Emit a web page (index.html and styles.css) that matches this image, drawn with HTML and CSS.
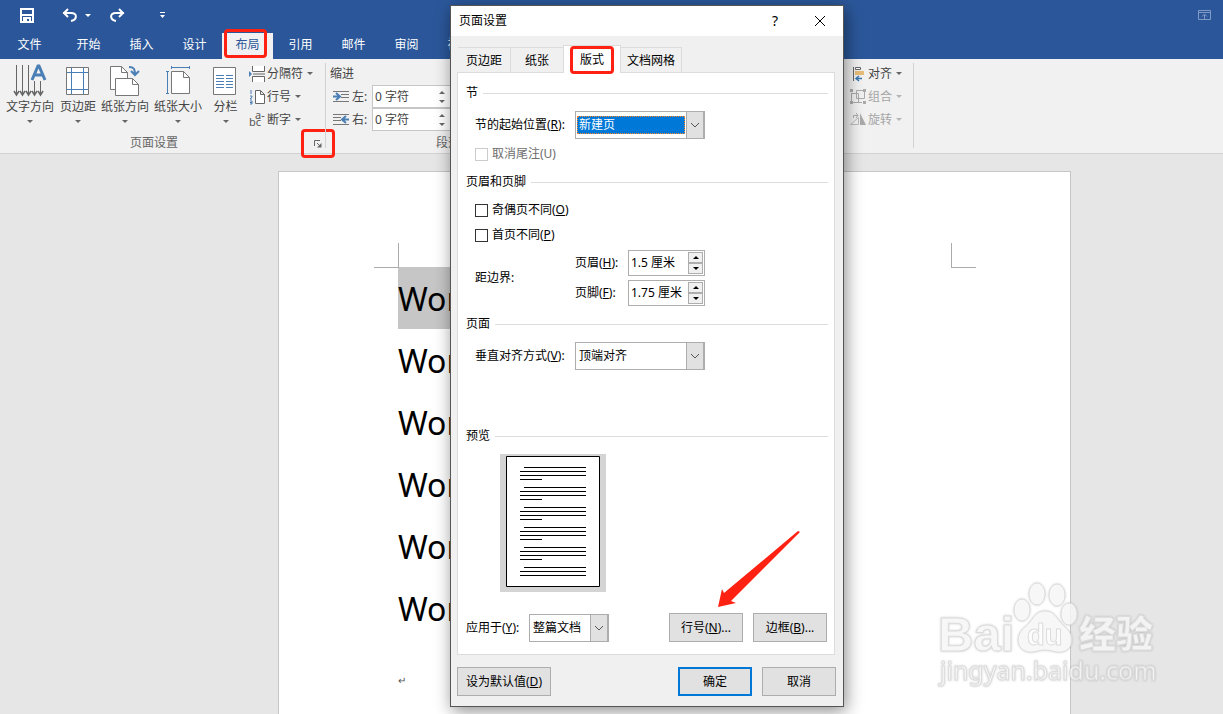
FILE: index.html
```html
<!DOCTYPE html>
<html lang="zh-CN">
<head>
    <meta charset="UTF-8">
    <meta name="viewport" content="width=device-width, initial-scale=1.0">
    <title>页面设置</title>
    <link rel="stylesheet" href="styles.css">
</head>
<body>
<header class="titlebar">
    <button class="quick save" aria-label="保存">
        <svg width="16" height="16" viewBox="0 0 16 16"><path d="M2 2h12v13H2zM3 8h10M5 15v-4h6v4" fill="none" stroke="#fff" stroke-width="2"/><path d="M6 12h2v3H6z" fill="#fff"/></svg>
    </button>
    <button class="quick undo" aria-label="撤消">
        <svg width="16" height="14" viewBox="0 0 16 14"><path d="M1 5h8c7 0 6 7 0 8M6 1L2 5l4 4" fill="none" stroke="#fff" stroke-width="2"/></svg>
    </button>
    <button class="quick undo-more" aria-label="撤消列表"><span class="caret"></span></button>
    <button class="quick redo" aria-label="恢复">
        <svg width="16" height="14" viewBox="0 0 16 14"><path d="M15 5H7c-7 0-6 7 0 8M10 1l4 4-4 4" fill="none" stroke="#fff" stroke-width="2"/></svg>
    </button>
    <button class="quick customize" aria-label="自定义快速访问工具栏">
        <svg width="7" height="8" viewBox="0 0 7 8"><path d="M1 1.500h5" stroke="#fff"/><path d="M1 4h5L3.500 7z" fill="#fff"/></svg>
    </button>
    <button class="quick ribbon-options" aria-label="功能区显示选项">
        <svg width="13" height="10" viewBox="0 0 13 10"><path d="M.5.5h12v9H.5zM0 2.500h13M6.500 9V5M4 6.500l2.500-2.500L9 6.500" fill="none" stroke="#7f9bc6"/></svg>
    </button>
</header>

<nav class="tabs">
    <a class="tab file" href="#">文件</a>
    <a class="tab" href="#">开始</a>
    <a class="tab" href="#">插入</a>
    <a class="tab" href="#">设计</a>
    <a class="tab active marked" href="#">布局</a>
    <a class="tab" href="#">引用</a>
    <a class="tab" href="#">邮件</a>
    <a class="tab" href="#">审阅</a>
    <a class="tab" href="#">视图</a>
</nav>

<div class="ribbon">
    <section class="group page-setup">
        <div class="tools">
            <button class="big direction">
                <svg width="34" height="34" viewBox="0 0 34 34"><path d="M3.500 2v29M9.500 2v29M15.500 2v29M21.500 18v13M27.500 18v13" stroke="#666" fill="none"/><path d="M1 28l2.500 4 2.500-4M7 28l2.500 4 2.500-4M13 28l2.500 4 2.500-4M19 28l2.500 4 2.500-4M25 28l2.500 4 2.500-4" fill="none" stroke="#666" stroke-width="1.500"/><path d="M19 17l6-14h1l6 14M21 12h9" fill="none" stroke="#4a7fb5" stroke-width="3"/></svg>
                <span>文字方向</span><i class="caret"></i>
            </button>
            <button class="big">
                <svg width="34" height="34" viewBox="0 0 34 34"><path d="M5.500 4.500h22v27h-22z" fill="#fff" stroke="#777"/><path d="M10.500 5v26M22.500 5v26M6 9.500h21M6 26.500h21" stroke="#4a7fb5"/></svg>
                <span>页边距</span><i class="caret"></i>
            </button>
            <button class="big">
                <svg width="34" height="34" viewBox="0 0 34 34"><path d="M2.500 3.500h11l6 6v17h-17z" fill="#fff" stroke="#777"/><path d="M13.500 3.500v6h6" fill="none" stroke="#777"/><path d="M7.500 15.500h17l6 6v11h-23z" fill="#fff" stroke="#777"/><path d="M24.500 15.500v6h6" fill="none" stroke="#777"/><path d="M21 4c5 0 6 2 6 8M23 8l4 4 4-4" fill="none" stroke="#4a7fb5" stroke-width="2"/></svg>
                <span>纸张方向</span><i class="caret"></i>
            </button>
            <button class="big">
                <svg width="34" height="34" viewBox="0 0 34 34"><path d="M10.500 8.500h12l6 6v16h-18z" fill="#fff" stroke="#777"/><path d="M22.500 8.500v6h6" fill="none" stroke="#777"/><path d="M10 4.500h19M10.500 3v3M28.500 3v3M6.500 8v22M5 8.500h3M5 30.500h3" stroke="#4a7fb5"/></svg>
                <span>纸张大小</span><i class="caret"></i>
            </button>
            <button class="big columns">
                <svg width="34" height="34" viewBox="0 0 34 34"><path d="M4.500 4.500h22v27h-22z" fill="#fff" stroke="#777"/><path d="M7 12.500h8M7 15.500h8M7 18.500h8M7 21.500h8M7 24.500h8M17 12.500h7M17 15.500h7M17 18.500h7M17 21.500h7M17 24.500h7" stroke="#4a7fb5"/></svg>
                <span>分栏</span><i class="caret"></i>
            </button>
            <div class="small-list">
                <button class="small">
                    <svg width="16" height="16" viewBox="0 0 16 16"><path d="M3.500 0v5.500h12V0M3.500 16v-5.500h12V16" fill="#fff" stroke="#666"/><path d="M4 8h12" stroke="#666"/><path d="M0 5l3 3-3 3z" fill="#4a7fb5"/></svg>
                    分隔符<i class="caret"></i>
                </button>
                <button class="small">
                    <svg width="16" height="16" viewBox="0 0 16 16"><path d="M6.500 1.500h5l4 4v9h-9zM11.500 1.500v4h4" fill="#fff" stroke="#666"/><path d="M2 1v4M1 7h2v1L1 10h2M1 12h2v3H1M1 13.500h2" fill="none" stroke="#4a7fb5"/></svg>
                    行号<i class="caret"></i>
                </button>
                <button class="small">
                    <svg class="hyphen" width="16" height="16" viewBox="0 0 16 16"><text x="0" y="14">bc</text><text x="6" y="7">a-</text></svg>
                    断字<i class="caret"></i>
                </button>
            </div>
        </div>
        <div class="group-name">页面设置
            <button class="launcher marked" aria-label="页面设置选项">
                <svg width="8" height="8" viewBox="0 0 8 8"><path d="M.5 6V.5H6M3 3l3 3" fill="none" stroke="#666"/><path d="M7.500 3v4.500H3z" fill="#666"/></svg>
            </button>
        </div>
    </section>

    <section class="group paragraph">
        <div class="indents">
            <span class="heading">缩进</span>
            <div class="indent">
                <svg width="18" height="13" viewBox="0 0 18 13"><path d="M1 1.500h16M9 4.500h8M9 7.500h8M1 11.500h16" stroke="#777"/><path d="M1 6.500h6M4 3l4 3.500L4 10" fill="none" stroke="#4a7fb5" stroke-width="2"/></svg>
                <label for="indentLeft">左:</label>
                <div class="ribbon-spin"><input id="indentLeft" type="text" value="0 字符"><span class="spin-arrows"><i class="up"></i><i class="caret"></i></span></div>
            </div>
            <div class="indent">
                <svg width="18" height="13" viewBox="0 0 18 13"><path d="M1 1.500h16M1 4.500h8M1 7.500h8M1 11.500h16" stroke="#777"/><path d="M17 6.500h-6M14 3l-4 3.500 4 3.500" fill="none" stroke="#4a7fb5" stroke-width="2"/></svg>
                <label for="indentRight">右:</label>
                <div class="ribbon-spin"><input id="indentRight" type="text" value="0 字符"><span class="spin-arrows"><i class="up"></i><i class="caret"></i></span></div>
            </div>
        </div>
        <div class="group-name">段落</div>
    </section>

    <section class="group arrange">
        <div class="small-list">
            <button class="small">
                <svg width="16" height="16" viewBox="0 0 16 16"><path d="M3.500 1v14" stroke="#666"/><path d="M5.500 1.500h5v2h-5z" fill="#fff" stroke="#666"/><path d="M5 5h9v4H5z" fill="#e8bd77"/><path d="M12 12.500H6M9 10l-3 2.500L9 15" fill="none" stroke="#3a76b0" stroke-width="1.500"/></svg>
                对齐<i class="caret"></i>
            </button>
            <button class="small" disabled>
                <svg width="16" height="16" viewBox="0 0 16 16"><path d="M1.500 4v9.500h7V4.500h-7M6.500 1.500h8v8h-8zM4 13.500h8" fill="none" stroke="#aaa"/><path d="M0 0h3v3H0zM13 0h3v3h-3zM0 12h3v3H0zM13 12h3v3h-3z" fill="#aaa"/></svg>
                组合<i class="caret"></i>
            </button>
            <button class="small" disabled>
                <svg width="16" height="16" viewBox="0 0 16 16"><path d="M.5 12.500h8v-7z" fill="none" stroke="#bbb"/><path d="M10 1v12h6z" fill="#aaa"/><path d="M3.500 6V3.500H8M6 1l2 2.500L6 6" fill="none" stroke="#aaa"/></svg>
                旋转<i class="caret"></i>
            </button>
        </div>
    </section>
</div>

<main class="workspace">
    <div class="page">
        <div class="text-area">
            <p><span class="selected">Word</span></p>
            <p>Word</p>
            <p>Word</p>
            <p>Word</p>
            <p>Word</p>
            <p>Word</p>
            <p class="mark">↵</p>
        </div>
    </div>
</main>

<div class="dialog" role="dialog" aria-labelledby="dialogTitle">
    <div class="dialog-title">
        <h1 id="dialogTitle">页面设置</h1>
        <button class="help" aria-label="帮助">?</button>
        <button class="close" aria-label="关闭">
            <svg width="12" height="12" viewBox="0 0 12 12"><path d="M1 1l10 10M11 1L1 11" stroke="#000"/></svg>
        </button>
    </div>
    <form class="dialog-body">
        <div class="dialog-tabs">
            <button type="button" class="dialog-tab margins">页边距</button>
            <button type="button" class="dialog-tab paper">纸张</button>
            <button type="button" class="dialog-tab layout active marked">版式</button>
            <button type="button" class="dialog-tab">文档网格</button>
        </div>
        <div class="panel">
            <section class="part section-part">
                <h2>节</h2>
                <div class="field">
                    <label class="field-name" for="sectionStart">节的起始位置(<u>R</u>):</label>
                    <div class="combo focused">
                        <select id="sectionStart"><option>新建页</option></select>
                        <span class="combo-arrow"><svg width="10" height="6" viewBox="0 0 10 6"><path d="M1 1l4 4 4-4" fill="none" stroke="#555"/></svg></span>
                    </div>
                </div>
                <label class="check disabled"><input type="checkbox" disabled>取消尾注(U)</label>
            </section>

            <section class="part header-part">
                <h2>页眉和页脚</h2>
                <label class="check"><input type="checkbox"><span>奇偶页不同(<u>O</u>)</span></label>
                <label class="check"><input type="checkbox"><span>首页不同(<u>P</u>)</span></label>
                <div class="field">
                    <span class="field-name">距边界:</span>
                    <div class="distances">
                        <div class="distance">
                            <label for="headerDistance">页眉(<u>H</u>):</label>
                            <div class="spin">
                                <input id="headerDistance" type="text" value="1.5 厘米">
                                <div class="spin-buttons">
                                    <button type="button" aria-label="增大页眉"><i class="up"></i></button>
                                    <button type="button" aria-label="减小页眉"><i class="caret"></i></button>
                                </div>
                            </div>
                        </div>
                        <div class="distance">
                            <label for="footerDistance">页脚(<u>F</u>):</label>
                            <div class="spin">
                                <input id="footerDistance" type="text" value="1.75 厘米">
                                <div class="spin-buttons">
                                    <button type="button" aria-label="增大页脚"><i class="up"></i></button>
                                    <button type="button" aria-label="减小页脚"><i class="caret"></i></button>
                                </div>
                            </div>
                        </div>
                    </div>
                </div>
            </section>

            <section class="part page-part">
                <h2>页面</h2>
                <div class="field">
                    <label class="field-name" for="verticalAlign">垂直对齐方式(<u>V</u>):</label>
                    <div class="combo">
                        <select id="verticalAlign"><option>顶端对齐</option></select>
                        <span class="combo-arrow"><svg width="10" height="6" viewBox="0 0 10 6"><path d="M1 1l4 4 4-4" fill="none" stroke="#555"/></svg></span>
                    </div>
                </div>
            </section>

            <section class="part">
                <h2>预览</h2>
                <div class="preview">
                    <svg width="94" height="131" viewBox="0 0 94 131">
                        <path d="M.5.5h93v130H.5z" fill="#fff" stroke="#000"/>
                        <path d="M18 11.500h62M14 15.500h66M14 19.500h66M14 23.500h22M18 31.500h62M14 35.500h66M14 39.500h66M14 43.500h22M18 51.500h62M14 55.500h66M14 59.500h66M14 63.500h22M18 71.500h62M14 75.500h66M14 79.500h66M14 83.500h22M18 91.500h62M14 95.500h66M14 99.500h66M14 103.500h22M18 111.500h62M14 115.500h66M14 119.500h66" stroke="#000"/>
                    </svg>
                </div>
                <div class="apply">
                    <label for="applyTo">应用于(<u>Y</u>):</label>
                    <div class="combo narrow">
                        <select id="applyTo"><option>整篇文档</option></select>
                        <span class="combo-arrow"><svg width="10" height="6" viewBox="0 0 10 6"><path d="M1 1l4 4 4-4" fill="none" stroke="#555"/></svg></span>
                    </div>
                    <button type="button" class="btn first">行号(<u>N</u>)...</button>
                    <button type="button" class="btn">边框(<u>B</u>)...</button>
                </div>
            </section>
        </div>
        <div class="dialog-footer">
            <button type="button" class="btn wide">设为默认值(<u>D</u>)</button>
            <button type="submit" class="btn first primary">确定</button>
            <button type="button" class="btn">取消</button>
        </div>
    </form>
    <svg class="pointer" width="84" height="78" viewBox="0 0 84 78"><path d="M1 77l4-18 2 4L81 1l2 1-69 69 5 2z" fill="#ff2212"/></svg>
</div>

<svg class="watermark" width="250" height="130" viewBox="0 0 250 130">
    <g class="watermark-shape">
        <text class="brand" x="18" y="81">Bai</text>
        <ellipse cx="102" cy="40" rx="8" ry="11"/>
        <ellipse cx="117" cy="24" rx="8" ry="11"/>
        <ellipse cx="137" cy="25" rx="8" ry="11"/>
        <ellipse cx="149" cy="44" rx="8" ry="11"/>
        <path d="M125 41c-11 0-12 10-20 16-9 7-9 20 0 24 8 3 12-1 20-1s12 4 20 1c9-4 9-17 0-24-8-6-9-16-20-16z"/>
        <text class="du" x="107" y="75">du</text>
        <text class="brand-cn" x="159" y="78">经验</text>
        <text class="site" x="20" y="110">jingyan.baidu.com</text>
    </g>
</svg>
</body>
</html>
```
FILE: styles.css
```css
* {
    box-sizing: border-box;
}

body {
    margin: 0;
    min-height: 100vh;
    display: flex;
    flex-direction: column;
    position: relative;
    overflow: hidden;
    background-color: #e6e6e6;
    color: #000;
    font-family: "Noto Sans", "Noto Sans CJK SC", sans-serif;
    font-size: 12px;
    line-height: 16px;
}

button, input, select {
    font: inherit;
    color: inherit;
    margin: 0;
    padding: 0;
    border: none;
    background: none;
    border-radius: 0;
}

svg {
    display: block;
    flex: none;
}

h1, h2, p {
    margin: 0;
    font-size: 12px;
    font-weight: normal;
}

/* small triangles */
.caret, .up {
    display: block;
    flex: none;
    border-left: 3px solid transparent;
    border-right: 3px solid transparent;
}

.caret {
    border-top: 3px solid currentColor;
}

.up {
    border-bottom: 3px solid currentColor;
}

/* red frames */
.marked {
    position: relative;
}

.marked::after {
    content: "";
    position: absolute;
    inset: -4px 6px 1px 2px;
    border: 3px solid #ff2212;
    border-radius: 4px;
}

/* title bar and tabs */
.titlebar {
    display: flex;
    align-items: center;
    height: 30px;
    padding: 0 12px 0 19px;
    background-color: #2b579a;
    color: #fff;
}

.undo {
    margin-left: 27px;
}

.undo-more {
    margin-left: 7px;
}

.redo {
    margin-left: 18px;
}

.customize {
    margin-left: 34px;
}

.ribbon-options {
    margin-left: auto;
}

.tabs {
    display: flex;
    gap: 2px;
    padding-top: 3px;
    background-color: #2b579a;
}

.tab {
    width: 51px;
    line-height: 24px;
    height: 26px;
    color: #fff;
    text-align: center;
    text-decoration: none;
}

.tab.file {
    width: 61px;
    padding-right: 2px;
}

.tab.active {
    background-color: #f1f1f1;
    color: #2b579a;
}

/* ribbon */
.ribbon {
    display: flex;
    height: 95px;
    background-color: #f1f1f1;
    border-bottom: 1px solid #d2d2d2;
    color: #444;
}

.ribbon .caret, .ribbon .up {
    opacity: 0.8;
}

.group {
    display: flex;
    flex-direction: column;
    position: relative;
    padding-top: 3px;
}

.group::after {
    content: "";
    position: absolute;
    right: 0;
    top: 4px;
    bottom: 5px;
    border-right: 1px solid #d2d2d2;
}

.page-setup {
    width: 326px;
}

.paragraph {
    width: 244px;
}

.arrange {
    width: 344px;
    align-items: flex-end;
    padding-right: 12px;
}

.tools {
    display: flex;
    gap: 5px;
    padding-left: 6px;
}

.big {
    display: flex;
    flex-direction: column;
    align-items: center;
    padding-top: 1px;
    white-space: nowrap;
}

.big span {
    line-height: 20px;
}

.big .caret {
    margin-top: 3px;
}

.direction {
    margin-right: 1px;
}

.columns {
    width: 37px;
}

.small {
    display: flex;
    align-items: center;
    gap: 2px;
    height: 23px;
    white-space: nowrap;
}

.small .caret {
    margin-left: 2px;
}

.small:disabled {
    color: #a6a6a6;
}

.hyphen {
    overflow: visible;
    font-size: 11px;
    fill: #555;
}

.group-name {
    position: relative;
    line-height: 20px;
    margin-top: 2px;
    padding-right: 18px;
    text-align: center;
    color: #666;
}

.paragraph .group-name {
    padding-right: 0;
}

.launcher {
    position: absolute;
    right: 4px;
    top: 7px;
}

.launcher.marked::after {
    inset: -11px -13px -10px -13px;
}

.indents {
    padding-left: 4px;
}

.heading {
    display: block;
    line-height: 23px;
}

.indent {
    display: flex;
    align-items: center;
    padding-left: 2px;
}

.indent label {
    width: 22px;
    padding-left: 2px;
}

.ribbon-spin {
    display: flex;
    width: 80px;
    height: 23px;
    border: 1px solid #c6c6c6;
    background-color: #fff;
}

.ribbon-spin input {
    flex: 1;
    min-width: 0;
    padding-left: 2px;
}

.spin-arrows {
    display: flex;
    flex-direction: column;
    justify-content: center;
    gap: 6px;
    padding-right: 6px;
}

/* document */
.workspace {
    flex: 1;
    display: flex;
    padding: 17px 152px 0 278px;
}

.page {
    flex: 1;
    padding: 95px 118px 0;
    background-color: #fff;
    border: 1px solid #c6c6c6;
    border-bottom: none;
}

.text-area {
    position: relative;
    margin-left: 1px;
}

.text-area::before, .text-area::after {
    content: "";
    position: absolute;
    top: -24px;
    width: 24px;
    height: 24px;
    border-bottom: 1px solid #ababab;
}

.text-area::before {
    left: -24px;
    border-right: 1px solid #ababab;
}

.text-area::after {
    right: -24px;
    border-left: 1px solid #ababab;
}

.text-area p {
    font-size: 32px;
    line-height: 64px;
    height: 62px;
}

.text-area .selected {
    display: inline-block;
    height: 62px;
    background-color: #c6c6c6;
}

.text-area .mark {
    font-size: 10px;
    line-height: 82px;
    color: #555;
}

/* dialog */
.dialog {
    position: absolute;
    left: 450px;
    top: 5px;
    width: 394px;
    background-color: #f0f0f0;
    border: 1px solid #555;
    box-shadow: 2px 4px 16px rgba(0, 0, 0, 0.45);
}

.dialog-title {
    display: flex;
    align-items: center;
    height: 30px;
    padding: 0 17px 0 8px;
    background-color: #fff;
}

.dialog-title h1 {
    flex: 1;
}

.help {
    font-size: 14px;
    margin-right: 36px;
}

.dialog-body {
    padding: 9px 8px 10px 6px;
}

.dialog-tabs {
    display: flex;
    align-items: flex-end;
    padding-left: 1px;
}

.dialog-tab {
    height: 25px;
    padding: 1px 6px 0;
    border: 1px solid #dcdcdc;
    border-bottom: none;
    border-left: none;
}

.dialog-tab.margins {
    width: 53px;
}

.dialog-tab.paper {
    width: 52px;
    border-right: none;
}

.dialog-tab.layout {
    width: 58px;
    height: 28px;
    margin-bottom: -1px;
    border-left: 1px solid #dcdcdc;
    background-color: #fff;
}

.dialog-tab.marked::after {
    inset: 0 6px -1px 6px;
}

.panel {
    padding: 10px 6px 12px 8px;
    background-color: #fff;
    border: 1px solid #dcdcdc;
}

.section-part {
    min-height: 89px;
}

.header-part {
    min-height: 142px;
}

.page-part {
    min-height: 112px;
}

.part h2 {
    display: flex;
    align-items: center;
    gap: 5px;
    line-height: 20px;
    margin-bottom: 8px;
}

.part h2::after {
    content: "";
    flex: 1;
    border-top: 1px solid #dcdcdc;
}

.part.header-part h2 {
    margin-bottom: 10px;
}

.field {
    display: flex;
    align-items: center;
    padding-left: 9px;
}

.field-name {
    width: 100px;
    white-space: nowrap;
}

.combo {
    display: flex;
    width: 130px;
    height: 28px;
    border: 1px solid #adadad;
    background-color: #fff;
}

.combo.narrow {
    width: 80px;
}

.combo select {
    flex: 1;
    min-width: 0;
    appearance: none;
    padding-left: 3px;
    outline: none;
}

.combo.focused select {
    margin: 4px 1px;
    padding-left: 1px;
    background-color: #0078d7;
    border: 1px dotted #ff8728;
    color: #fff;
}

.combo-arrow {
    display: flex;
    align-items: center;
    justify-content: center;
    width: 18px;
    background-color: #e1e1e1;
    border: 1px solid #adadad;
    border-width: 0 1px 0 1px;
}

.check {
    display: flex;
    align-items: center;
    gap: 4px;
    padding-left: 9px;
    margin-top: 9px;
}

.check input {
    appearance: none;
    width: 13px;
    height: 13px;
    border: 1px solid #333;
    background-color: #fff;
}

.check.disabled {
    margin-top: 7px;
    color: #6d6d6d;
}

.check.disabled input {
    border-color: #ccc;
}

.header-part .field {
    margin-top: 7px;
}

.distances {
    display: flex;
    flex-direction: column;
    gap: 4px;
}

.distance {
    display: flex;
    align-items: center;
}

.distance label {
    width: 53px;
}

.spin {
    display: flex;
    width: 77px;
    height: 26px;
    padding: 1px;
    border: 1px solid #adadad;
}

.spin input {
    flex: 1;
    min-width: 0;
    padding-left: 1px;
}

.spin-buttons {
    display: flex;
    flex-direction: column;
    width: 15px;
}

.spin-buttons button {
    flex: 1;
    display: flex;
    align-items: center;
    justify-content: center;
    border: 1px solid #adadad;
    background-color: #f0f0f0;
}

.preview {
    width: 106px;
    height: 138px;
    margin-left: 34px;
    padding: 2px 6px;
    background-color: #d4d4d4;
}

.apply {
    display: flex;
    align-items: center;
    margin-top: 21px;
}

.apply label {
    width: 63px;
}

.btn {
    width: 74px;
    height: 29px;
    margin-left: 10px;
    border: 1px solid #adadad;
    background-color: #e1e1e1;
    white-space: nowrap;
}

.btn.first {
    margin-left: auto;
}

.btn.wide {
    width: 94px;
    margin-left: 0;
}

.btn.primary {
    border: 2px solid #0078d7;
}

.apply .btn:last-child {
    margin-right: 1px;
}

.dialog-footer {
    display: flex;
    margin-top: 12px;
    margin-right: -1px;
}

.pointer {
    position: absolute;
    left: 266px;
    top: 524px;
    pointer-events: none;
}

/* watermark */
.watermark {
    position: absolute;
    right: 53px;
    bottom: 14px;
    pointer-events: none;
}

.watermark-shape {
    fill: #fff;
    fill-opacity: 0.8;
    stroke: #dcdcdc;
    stroke-width: 1px;
    filter: drop-shadow(0 0 1px rgba(0, 0, 0, 0.2));
}

.brand {
    font-family: "Liberation Sans", sans-serif;
    font-size: 49px;
    font-weight: bold;
}

.du {
    font-family: "Liberation Sans", sans-serif;
    font-size: 29px;
    font-weight: bold;
}

.brand-cn {
    font-family: "Noto Sans CJK SC", sans-serif;
    font-size: 37px;
    font-weight: 900;
}

.site {
    font-size: 25px;
}
```
